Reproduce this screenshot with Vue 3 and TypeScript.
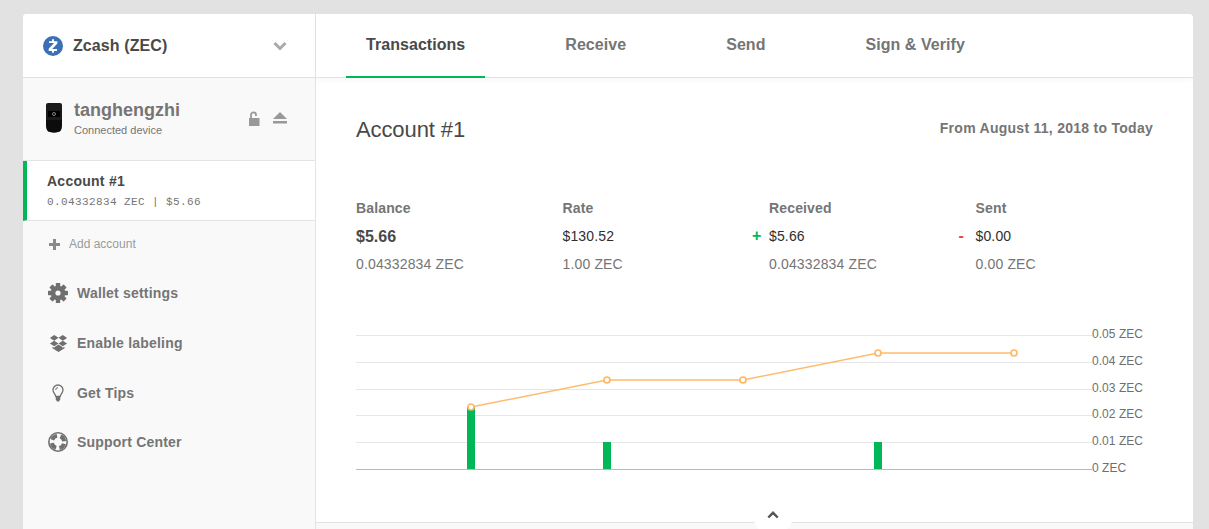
<template>
  <div class="page">
    <div class="card">
      <aside class="sidebar">
        <div class="coin-select">
          <svg class="coin-icon" width="20" height="20" viewBox="0 0 20 20">
            <circle cx="10" cy="10" r="10" fill="#3b6fb6" />
            <path d="M9 3.2h2v2h3.4v2.2L9.2 13H14v1.900h-3v1.900H9v-1.900H5.700v-2.100L11 7.100H6V5.200h3z" fill="#fff" />
          </svg>
          <span class="coin-name">Zcash (ZEC)</span>
          <svg class="chevron" width="14" height="10" viewBox="0 0 14 10">
            <path d="M1.500 2 7 7.500 12.500 2" fill="none" stroke="#a9a9a9" stroke-width="3" />
          </svg>
        </div>

        <div class="device">
          <svg class="device-pic" width="16" height="30" viewBox="0 0 16 30">
            <path d="M0 2Q0 0 2 0h12q2 0 2 2v18q0 7-2.500 8.600-5.500 2-11 0Q0 27 0 20z" fill="#1a1a1a" />
            <path d="M0 17h16v3q0 7-2.500 8.600-5.500 2-11 0Q0 27 0 20z" fill="#0c0c0c" />
            <rect x="2" y="8" width="12" height="6" fill="#000" />
            <circle cx="8" cy="11" r="1.500" fill="none" stroke="#bbb" stroke-width=".7" />
          </svg>
          <div class="device-info">
            <div class="device-name">tanghengzhi</div>
            <div class="device-status">Connected device</div>
          </div>
          <div class="device-actions">
            <svg width="12" height="15" viewBox="0 0 12 15">
              <path d="M1 7h10.500v8H1z" fill="#999" />
              <path d="M3 7V3.800a2.500 2.500 0 0 1 5 0V5" fill="none" stroke="#999" stroke-width="1.800" />
            </svg>
            <svg width="14" height="12" viewBox="0 0 14 12">
              <path d="M7 0l7 7H0z" fill="#999" />
              <rect y="9" width="14" height="2.500" fill="#999" />
            </svg>
          </div>
        </div>

        <div class="account">
          <div class="account-name">Account #1</div>
          <div class="account-sub">0.04332834 ZEC | $5.66</div>
        </div>

        <div class="add-account">
          <svg width="11" height="11" viewBox="0 0 11 11">
            <path d="M4 0h3v4h4v3H7v4H4V7H0V4h4z" fill="#8a8a8a" />
          </svg>
          <span>Add account</span>
        </div>

        <nav class="menu">
          <div v-for="item in menu" :key="item.label" class="menu-item">
            <span class="menu-icon">
              <svg v-if="item.icon === 'gear'" width="20" height="20" viewBox="0 0 20 20">
                <rect v-for="a in teeth" :key="a" x="7.800" y="0" width="4.400" height="20" rx=".6" fill="#6f6f6f" :transform="`rotate(${a} 10 10)`" />
                <circle cx="10" cy="10" r="5.300" fill="none" stroke="#6f6f6f" stroke-width="4" />
                <circle cx="10" cy="10" r="2.600" fill="#f9f9f9" />
              </svg>
              <svg v-else-if="item.icon === 'dropbox'" width="19" height="17" viewBox="0 0 19 17">
                <path d="M5.200 0 9.500 2.800 5.200 5.700.9 2.900zM13.800 0l4.300 2.900-4.300 2.800-4.300-2.900zM.9 8.500l4.300-2.800 4.300 2.800-4.300 2.800zM13.800 5.700l4.300 2.800-4.300 2.800-4.300-2.800zM5.200 12.200l4.300-2.800 4.300 2.800-4.300 2.800zM3.500 11.700l1.700 1.100 4.300-2.700 4.300 2.700 1.700-1.100v1.600L9.500 17l-6-3.700z" fill="#6f6f6f" />
              </svg>
              <svg v-else-if="item.icon === 'bulb'" width="14" height="18" viewBox="0 0 14 18">
                <path d="M4.800 12.500C4.500 10 2 8.800 2 6a5 5 0 0 1 10 0c0 2.800-2.500 4-2.800 6.500z" fill="none" stroke="#6f6f6f" stroke-width="1.300" />
                <path d="M4.700 6A2.400 2.400 0 0 1 7 3.600" fill="none" stroke="#6f6f6f" stroke-width="1" />
                <path d="M4.800 12.800h4.400v2.600L8 17.500H6l-1.200-2.100z" fill="#6f6f6f" />
              </svg>
              <svg v-else width="20" height="20" viewBox="0 0 20 20">
                <circle cx="10" cy="10" r="9.200" fill="none" stroke="#6f6f6f" stroke-width="1.600" />
                <circle cx="10" cy="10" r="6.200" fill="none" stroke="#6f6f6f" stroke-width="4" stroke-dasharray="6.200 3.540" stroke-dashoffset="-1.770" />
              </svg>
            </span>
            <span>{{ item.label }}</span>
          </div>
        </nav>
      </aside>

      <main class="content">
        <div class="tabs">
          <a v-for="(tab, i) in tabs" :key="tab" :class="['tab', { active: i === 0 }]">{{ tab }}</a>
        </div>

        <div class="body">
          <div class="title-row">
            <h2 class="title">Account #1</h2>
            <div class="range">From August 11, 2018 to Today</div>
          </div>

          <div class="stats">
            <div v-for="col in stats" :key="col.label" class="stat">
              <div class="stat-label">{{ col.label }}</div>
              <div :class="['stat-value', { big: col.big }]">
                <span v-if="col.sign" :class="['sign', col.sign === '+' ? 'plus' : 'minus']">{{ col.sign }}</span>
                {{ col.value }}
              </div>
              <div class="stat-sub">{{ col.sub }}</div>
            </div>
          </div>

          <svg class="chart" width="837" height="150" viewBox="356 328 837 150">
            <line v-for="g in grid" :key="g.label" x1="356" x2="1092" :y1="g.y + 0.5" :y2="g.y + 0.5"
              :stroke="g.y === 469 ? '#b9b9b9' : '#e6e6e6'" />
            <text v-for="g in grid" :key="'t' + g.label" x="1092" :y="g.y + 3" class="axis">{{ g.label }}</text>
            <rect v-for="b in bars" :key="b.x" :x="b.x" :y="b.y" width="8" :height="469 - b.y" fill="#01b757" />
            <polyline :points="points.map(p => p.join(',')).join(' ')" fill="none" stroke="#ffbb6e" stroke-width="1.500" />
            <circle v-for="p in points" :key="p[0]" :cx="p[0]" :cy="p[1]" r="3" fill="#fff" stroke="#ffb866" stroke-width="1.700" />
          </svg>
        </div>

        <div class="collapse">
          <button class="collapse-btn" type="button">
            <svg width="12" height="8" viewBox="0 0 12 8">
              <path d="M1.300 6.500 6 1.800l4.700 4.700" fill="none" stroke="#555" stroke-width="2.400" />
            </svg>
          </button>
        </div>
      </main>
    </div>
  </div>
</template>

<script setup lang="ts">
const tabs = ['Transactions', 'Receive', 'Send', 'Sign & Verify']

const menu = [
  { label: 'Wallet settings', icon: 'gear' },
  { label: 'Enable labeling', icon: 'dropbox' },
  { label: 'Get Tips', icon: 'bulb' },
  { label: 'Support Center', icon: 'support' }
]

const teeth = [0, 45, 90, 135]

const stats = [
  { label: 'Balance', value: '$5.66', sub: '0.04332834 ZEC', big: true, sign: '' },
  { label: 'Rate', value: '$130.52', sub: '1.00 ZEC', big: false, sign: '' },
  { label: 'Received', value: '$5.66', sub: '0.04332834 ZEC', big: false, sign: '+' },
  { label: 'Sent', value: '$0.00', sub: '0.00 ZEC', big: false, sign: '-' }
]

const grid = [
  { y: 335, label: '0.05 ZEC' },
  { y: 362, label: '0.04 ZEC' },
  { y: 389, label: '0.03 ZEC' },
  { y: 415, label: '0.02 ZEC' },
  { y: 442, label: '0.01 ZEC' },
  { y: 469, label: '0 ZEC' }
]

const bars = [
  { x: 467, y: 407 },
  { x: 603, y: 442 },
  { x: 874, y: 442 }
]

const points = [
  [471, 407],
  [607, 380],
  [743, 380],
  [878, 353],
  [1014, 353]
]
</script>

<style>
html,
body {
  margin: 0;
  background: #e2e2e2;
}
</style>

<style scoped>
.page {
  height: 529px;
  overflow: hidden;
  padding: 14px 16px 0 23px;
  box-sizing: border-box;
  font-family: 'Liberation Sans', Arial, sans-serif;
}

.card {
  display: flex;
  height: 560px;
  background: #fff;
  border-radius: 4px;
  overflow: hidden;
}

.sidebar {
  width: 293px;
  flex: none;
  box-sizing: border-box;
  background: #f9f9f9;
  border-right: 1px solid #e3e3e3;
}

.coin-select {
  display: flex;
  align-items: center;
  height: 63px;
  padding: 0 28px 0 20px;
  background: #fff;
  border-bottom: 1px solid #e3e3e3;
}

.coin-icon {
  margin-right: 10px;
}

.coin-name {
  flex: 1;
  font-size: 16px;
  font-weight: 700;
  letter-spacing: 0.1px;
  color: #494949;
}

.device {
  display: flex;
  align-items: center;
  height: 82px;
  padding: 0 28px 0 23px;
  border-bottom: 1px solid #e3e3e3;
}

.device-pic {
  margin-right: 12px;
  margin-top: -2px;
}

.device-info {
  flex: 1;
}

.device-name {
  font-size: 18px;
  font-weight: 700;
  color: #757575;
  line-height: 22px;
}

.device-status {
  font-size: 11px;
  color: #757575;
  line-height: 18px;
}

.device-actions {
  display: flex;
  align-items: center;
  gap: 13px;
  margin-top: -2px;
}

.account {
  height: 59px;
  padding-left: 20px;
  background: #fff;
  border-left: 4px solid #01b757;
  border-bottom: 1px solid #e3e3e3;
}

.account-name {
  padding-top: 11px;
  font-size: 14px;
  font-weight: 700;
  line-height: 18px;
  letter-spacing: 0.25px;
  color: #494949;
}

.account-sub {
  margin-top: 6px;
  font-family: 'Liberation Mono', monospace;
  font-size: 11px;
  letter-spacing: 0.4px;
  color: #757575;
}

.add-account {
  display: flex;
  align-items: center;
  gap: 9px;
  height: 46px;
  padding-left: 26px;
  font-size: 12px;
  color: #9a9a9a;
}

.menu {
  padding-top: 1px;
}

.menu-item {
  display: flex;
  align-items: center;
  height: 50px;
  padding-left: 25px;
  font-size: 14px;
  font-weight: 700;
  letter-spacing: 0.2px;
  color: #757575;
}

.menu-item:last-child {
  height: 48px;
}

.menu-icon {
  display: flex;
  justify-content: center;
  width: 20px;
  margin-right: 9px;
}

.content {
  flex: 1;
  min-width: 0;
  position: relative;
}

.tabs {
  display: flex;
  height: 63px;
  padding-left: 30px;
  border-bottom: 1px solid #e3e3e3;
  box-shadow: 0 2px 6px rgba(0, 0, 0, 0.03);
}

.tab {
  height: 64px;
  box-sizing: border-box;
  margin-right: 60px;
  padding: 22px 20px 0;
  font-size: 16px;
  font-weight: 700;
  line-height: 18px;
  letter-spacing: 0.05px;
  color: #757575;
}

.tab.active {
  color: #494949;
  border-bottom: 2px solid #01b757;
}

.body {
  padding: 0 0 0 40px;
}

.title-row {
  display: flex;
  justify-content: space-between;
  align-items: flex-start;
  padding: 40px 40px 0 0;
  height: 81px;
}

.title {
  margin: 0;
  font-size: 22px;
  font-weight: 400;
  line-height: 24px;
  letter-spacing: -0.1px;
  color: #494949;
}

.range {
  margin-top: 1px;
  font-size: 14px;
  font-weight: 700;
  line-height: 18px;
  letter-spacing: 0.27px;
  color: #757575;
}

.stats {
  display: grid;
  grid-template-columns: repeat(4, 206.5px);
}

.stat-label {
  font-size: 14px;
  font-weight: 700;
  line-height: 18px;
  letter-spacing: 0.15px;
  color: #757575;
}

.stat-value {
  position: relative;
  margin-top: 10px;
  font-size: 14px;
  line-height: 18px;
  letter-spacing: 0.15px;
  color: #2f2f2f;
}

.stat-value.big {
  padding-top: 1px;
  margin-bottom: -1px;
  font-size: 16px;
  font-weight: 700;
  letter-spacing: 0;
  color: #494949;
}

.sign {
  position: absolute;
  left: -17px;
  font-size: 16px;
  font-weight: 700;
}

.sign.plus {
  color: #01b757;
}

.sign.minus {
  color: #e24a4a;
}

.stat-sub {
  margin-top: 10px;
  font-size: 14px;
  line-height: 18px;
  letter-spacing: 0.15px;
  color: #757575;
}

.chart {
  display: block;
  margin-top: 55px;
}

.axis {
  font-family: 'Liberation Sans', Arial, sans-serif;
  font-size: 12px;
  letter-spacing: 0.05px;
  fill: #6f6f6f;
}

.collapse {
  margin-top: 44px;
  height: 60px;
  background: #f9f9f9;
  border-top: 1px solid #e3e3e3;
  display: flex;
  justify-content: center;
  padding-left: 37px;
}

.collapse-btn {
  width: 40px;
  height: 40px;
  margin-top: -28px;
  padding: 0;
  border: 0;
  border-radius: 50%;
  background: #fff;
  display: flex;
  align-items: center;
  justify-content: center;
}
</style>
